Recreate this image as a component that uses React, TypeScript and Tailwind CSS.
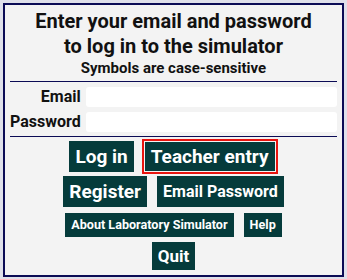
export default function App() {
  const btn = "bg-[#053b3b] text-white font-bold leading-none"
  return (
    <div className="h-[279px] w-[347px] bg-[#dfe0ea] p-[3px] font-['Roboto',sans-serif]">
      <div className="flex h-[274px] w-[341px] flex-col items-center border-2 border-[#0b0b55] bg-[#f3f3f3] px-[5px] [&>*]:shrink-0">
        {/* Heading */}
        <div className="mt-[4px] text-center text-[20px] font-bold leading-[25px] text-[#111]">
          Enter your email and password
          <br />
          to log in to the simulator
        </div>
        <div className="text-[15px] font-bold leading-[18px] text-[#111]">
          Symbols are case-sensitive
        </div>
        <div className="mt-[4px] h-px w-full bg-[#0b0b55]" />

        {/* Fields */}
        <div className="mt-[5px] grid w-full grid-cols-[auto_1fr] items-center gap-x-[5px] gap-y-[5px]">
          <label className="text-right text-[16px] font-bold leading-[20px] text-[#111]">Email</label>
          <input className="h-[20px] min-w-0 rounded-[3px] bg-white outline-none" />
          <label className="text-right text-[16px] font-bold leading-[20px] text-[#111]">Password</label>
          <input type="password" className="h-[20px] min-w-0 rounded-[3px] bg-white outline-none" />
        </div>
        <div className="mt-[4px] h-px w-full bg-[#0b0b55]" />

        {/* Buttons */}
        <div className="mt-[2px] flex items-center gap-[8px]">
          <button className={`${btn} h-[31px] px-[6px] text-[19px]`}>Log in</button>
          <button className="border-2 border-[#e8140f] p-px">
            <span className={`${btn} block h-[29px] px-[6px] pt-[5px] text-[19px]`}>Teacher entry</span>
          </button>
        </div>
        <div className="mt-[2px] flex items-center gap-[10px]">
          <button className={`${btn} h-[31px] px-[6px] text-[19px]`}>Register</button>
          <button className={`${btn} h-[31px] px-[6px] text-[16px]`}>Email Password</button>
        </div>
        <div className="mt-[6px] flex items-center gap-[10px]">
          <button className={`${btn} h-[24px] px-[6px] text-[12.6px]`}>About Laboratory Simulator</button>
          <button className={`${btn} h-[24px] px-[6px] text-[12.6px]`}>Help</button>
        </div>
        <div className="mt-[5px]">
          <button className={`${btn} h-[28px] px-[6px] text-[17px]`}>Quit</button>
        </div>
      </div>
    </div>
  )
}
